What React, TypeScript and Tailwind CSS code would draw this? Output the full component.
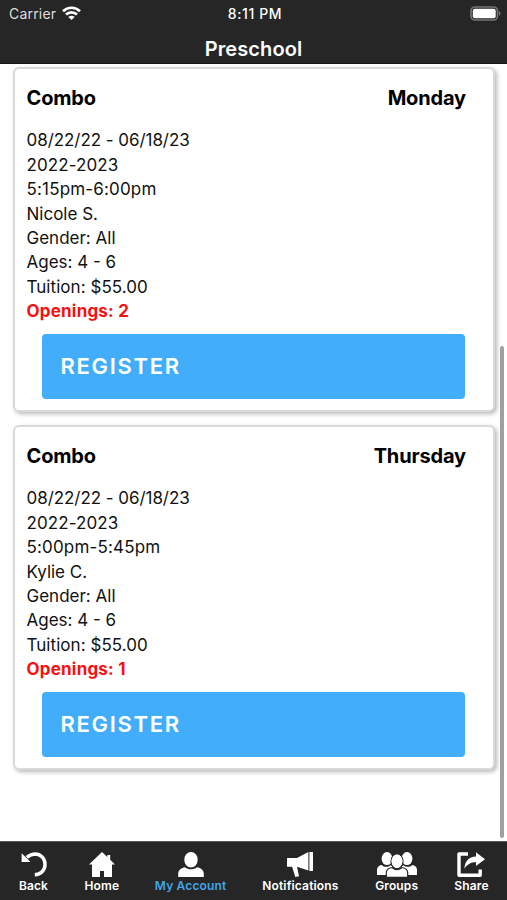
import type { ReactNode } from 'react';

interface ClassInfo {
  id: number;
  name: string;
  day: string;
  dates: string;
  session: string;
  time: string;
  instructor: string;
  gender: string;
  ages: string;
  tuition: string;
  openings: number;
}

const classes: ClassInfo[] = [
  {
    id: 1,
    name: 'Combo',
    day: 'Monday',
    dates: '08/22/22 - 06/18/23',
    session: '2022-2023',
    time: '5:15pm-6:00pm',
    instructor: 'Nicole S.',
    gender: 'All',
    ages: '4 - 6',
    tuition: '$55.00',
    openings: 2,
  },
  {
    id: 2,
    name: 'Combo',
    day: 'Thursday',
    dates: '08/22/22 - 06/18/23',
    session: '2022-2023',
    time: '5:00pm-5:45pm',
    instructor: 'Kylie C.',
    gender: 'All',
    ages: '4 - 6',
    tuition: '$55.00',
    openings: 1,
  },
];

const WifiIcon = () => (
  <svg width="19" height="15" viewBox="0 0 19 15" fill="none" stroke="white" strokeWidth="2.7">
    <path d="M1 5.2C5.8 .6 13.2 .6 18 5.2" />
    <path d="M4 8.6C7.1 5.7 11.9 5.7 15 8.6" />
    <path d="M9.5 14L6.3 10.9C8.1 9.3 10.9 9.3 12.7 10.9Z" fill="white" stroke="none" />
  </svg>
);

const BatteryIcon = () => (
  <svg width="31" height="15" viewBox="0 0 31 15">
    <rect x="1" y="1" width="26.5" height="13" rx="4" fill="none" stroke="#777" strokeWidth="1.6" />
    <rect x="2.8" y="2.8" width="22.9" height="9.4" rx="2" fill="white" />
    <path d="M29 5.3C31 6 31 9 29 9.7Z" fill="#777" />
  </svg>
);

const BackIcon = () => (
  <svg width="26" height="26" viewBox="0 0 26 26" fill="none">
    <path d="M5.8 5.4C9 2.6 12 1.9 14.5 1.9C20 2.2 24 6.6 24 12.2C24 18.4 19.7 22.6 13.8 22.7" stroke="white" strokeWidth="3.5" />
    <path d="M.6 1.2V9.9H9.4L6.8 7.2L3.5 4Z" fill="white" />
  </svg>
);

const HomeIcon = () => (
  <svg width="26" height="26" viewBox="0 0 26 26" fill="white">
    <path d="M13 0L18.4 5.1V3H21.2V7.8L26 12.5H23V25H15V19H11V25H3V12.5H0Z" />
  </svg>
);

const AccountIcon = () => (
  <svg width="26" height="26" viewBox="0 0 26 26" fill="white">
    <ellipse cx="13" cy="7.7" rx="6.7" ry="7.7" />
    <path d="M.2 25V21.5C.5 17.8 3.5 15.8 7 15.2C10.5 18 15.5 18 19 15.2C22.5 15.8 25.5 17.8 25.8 21.5V25Z" />
  </svg>
);

const MegaphoneIcon = () => (
  <svg width="28" height="26" viewBox="0 0 28 26" fill="white">
    <path d="M1 6H11L22.4 0V18.5L11 14.8L13 24.2L9.3 25L6.1 14.8H1Z" />
    <path d="M23.4 0H27V19H23.4Z" />
  </svg>
);

const GroupsIcon = () => (
  <svg width="40" height="26" viewBox="0 0 40 26" fill="white">
    <ellipse cx="10" cy="6.6" rx="5.4" ry="6.5" />
    <ellipse cx="30" cy="6.6" rx="5.4" ry="6.5" />
    <path d="M0 23V17.5C.2 15 2 13.4 4.6 13C7.2 15.4 10.8 15.4 13.7 13.3L16 15L10 23Z" />
    <path d="M40 23V17.5C39.8 15 38 13.4 35.4 13C32.8 15.4 29.2 15.4 26.3 13.3L24 15L30 23Z" />
    <ellipse cx="20" cy="9.2" rx="6" ry="7.3" stroke="#262626" strokeWidth="1.2" />
    <path
      d="M9.3 25.4V20.5C9.6 17.6 12 16 15 15.5C18 18 22 18 25 15.5C28 16 30.4 17.6 30.7 20.5V25.4Z"
      stroke="#262626"
      strokeWidth="1.2"
    />
    <ellipse cx="20" cy="9.2" rx="5.4" ry="6.7" />
  </svg>
);

const ShareIcon = () => (
  <svg width="28" height="26" viewBox="0 0 28 26" fill="none">
    <path d="M11 2H2V23.2H23.2V17.5" stroke="white" strokeWidth="3.4" strokeLinejoin="round" />
    <path d="M19 .2L28 7.2L19 14V10.2C14 10.2 10.4 12 7.4 16.7C7.8 9.3 11.7 4.8 19 4.4Z" fill="white" />
  </svg>
);

interface NavItem {
  label: string;
  icon: ReactNode;
  width: string;
  active?: boolean;
}

const navItems: NavItem[] = [
  { label: 'Back', icon: <BackIcon />, width: 'w-[30px]' },
  { label: 'Home', icon: <HomeIcon />, width: 'w-[35px]' },
  { label: 'My Account', icon: <AccountIcon />, width: 'w-[71px]', active: true },
  { label: 'Notifications', icon: <MegaphoneIcon />, width: 'w-[77px]' },
  { label: 'Groups', icon: <GroupsIcon />, width: 'w-[44px]' },
  { label: 'Share', icon: <ShareIcon />, width: 'w-[34px]' },
];

const ClassCard = ({ item }: { item: ClassInfo }) => (
  <div className="h-[345px] rounded-md border-2 border-[#d9d9d9] bg-white pt-[14px] pl-[11.5px] shadow-[2px_2px_4px_rgba(0,0,0,0.28)]">
    <div className="flex justify-between pr-[27px] text-[20px] leading-[30px] font-[650] tracking-[-0.15px]">
      <h2>{item.name}</h2>
      <h2>{item.day}</h2>
    </div>
    <div className="mt-[15.4px] text-[17px] leading-[24.4px] text-[#111]">
      <p className="tracking-[-0.05px]">{item.dates}</p>
      <p className="tracking-[0.1px]">{item.session}</p>
      <p className="tracking-[0.17px]">{item.time}</p>
      <p>{item.instructor}</p>
      <p>Gender: {item.gender}</p>
      <p>Ages: {item.ages}</p>
      <p className="tracking-[0.05px]">Tuition: {item.tuition}</p>
      <p className="font-bold tracking-[0.2px] text-[#f8100f]">Openings: {item.openings}</p>
    </div>
    <button className="mt-[10.4px] ml-[15.5px] block h-[64.5px] w-[423px] rounded bg-[#42aefb] pt-px pl-[18.5px] text-left text-[22px] font-semibold tracking-[1.7px] text-white">
      REGISTER
    </button>
  </div>
);

export default function App() {
  return (
    <div className="flex h-[900px] w-[507px] flex-col overflow-hidden bg-white font-['Inter','Liberation_Sans',sans-serif] text-black">
      <header className="h-[64px] shrink-0 border-b border-[#151515] bg-[#262626] text-white">
        <div className="grid h-[27px] grid-cols-3 items-center pr-[6px] pl-[9px] text-[14px]">
          <div className="flex items-center gap-[6px] text-[#dedede]">
            <span className="tracking-[0.2px]">Carrier</span>
            <WifiIcon />
          </div>
          <span className="text-center font-medium tracking-[0.6px]">8:11 PM</span>
          <div className="flex justify-end">
            <BatteryIcon />
          </div>
        </div>
        <h1 className="text-center text-[20px] leading-[44px] font-semibold tracking-[0.1px]">Preschool</h1>
      </header>

      <main className="flex min-h-0 flex-1 justify-between">
        <div className="ml-[13px] flex w-[482px] flex-col gap-[13px] pt-[3px]">
          {classes.map(item => (
            <ClassCard key={item.id} item={item} />
          ))}
        </div>
        <div className="mt-[282px] mr-[3px] h-[492px] w-1 rounded-full bg-[#a0a0a0]" />
      </main>

      <nav className="flex h-[59px] shrink-0 gap-[35.8px] border-t border-[#555] bg-[#262626] pt-[10px] pl-[18.5px]">
        {navItems.map(item => (
          <div
            key={item.label}
            className={`flex shrink-0 flex-col items-center text-[12px] leading-[16px] font-semibold tracking-[0.15px] whitespace-nowrap ${item.width} ${
              item.active ? 'text-[#42a5e8]' : 'text-white'
            }`}
          >
            <div className="h-[26px]">{item.icon}</div>
            <span>{item.label}</span>
          </div>
        ))}
      </nav>
    </div>
  );
}
